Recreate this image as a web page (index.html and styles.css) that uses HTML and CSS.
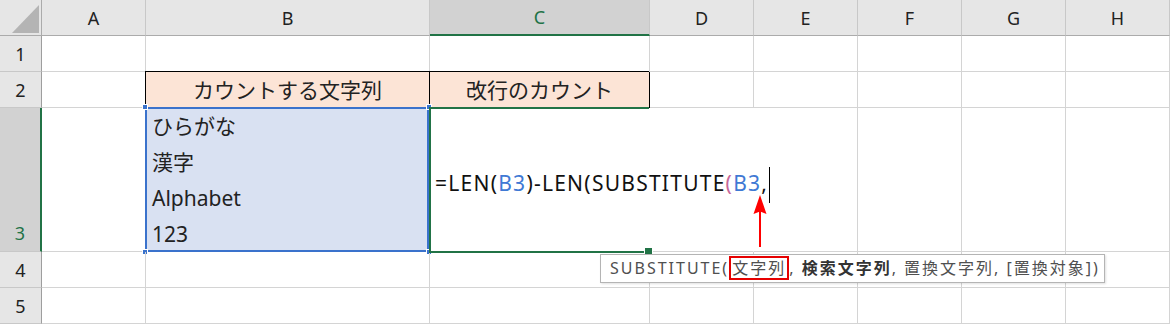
FILE: index.html
```html
<!DOCTYPE html>
<html lang="ja">
<head>
    <meta charset="UTF-8">
    <meta name="viewport" content="width=device-width, initial-scale=1.0">
    <title>SUBSTITUTE 関数</title>
    <link rel="stylesheet" href="styles.css">
</head>
<body>
    <div class="sheet">
        <div class="grid">
            <!-- column headers -->
            <div class="corner">
                <svg viewBox="0 0 42 36" width="42" height="36">
                    <polygon points="12,33 39,33 39,5" fill="#b4b4b4"></polygon>
                </svg>
            </div>
            <div class="col-head">A</div>
            <div class="col-head">B</div>
            <div class="col-head active">C</div>
            <div class="col-head">D</div>
            <div class="col-head">E</div>
            <div class="col-head">F</div>
            <div class="col-head">G</div>
            <div class="col-head">H</div>

            <!-- row 1 -->
            <div class="row-head">1</div>
            <div class="cell"></div>
            <div class="cell"></div>
            <div class="cell"></div>
            <div class="cell"></div>
            <div class="cell"></div>
            <div class="cell"></div>
            <div class="cell"></div>
            <div class="cell"></div>

            <!-- row 2 -->
            <div class="row-head">2</div>
            <div class="cell"></div>
            <div class="cell title">カウントする文字列</div>
            <div class="cell title">改行のカウント</div>
            <div class="cell"></div>
            <div class="cell"></div>
            <div class="cell"></div>
            <div class="cell"></div>
            <div class="cell"></div>

            <!-- row 3 -->
            <div class="row-head active tall">3</div>
            <div class="cell"></div>
            <div class="cell source">
                ひらがな<br>漢字<br>Alphabet<br>123
                <span class="handle tl"></span>
                <span class="handle tr"></span>
                <span class="handle bl"></span>
                <span class="handle br"></span>
            </div>
            <div class="cell editing">
                <div class="formula">=LEN(<span class="ref">B3</span>)-LEN(SUBSTITUTE<span class="paren">(</span><span class="ref">B3</span>,<span class="caret"></span></div>
            </div>
            <div class="cell spill"></div>
            <div class="cell"></div>
            <div class="cell"></div>
            <div class="cell"></div>
            <div class="cell"></div>

            <!-- row 4 -->
            <div class="row-head">4</div>
            <div class="cell"></div>
            <div class="cell"></div>
            <div class="cell"></div>
            <div class="cell"></div>
            <div class="cell"></div>
            <div class="cell"></div>
            <div class="cell"></div>
            <div class="cell"></div>

            <!-- row 5 -->
            <div class="row-head">5</div>
            <div class="cell"></div>
            <div class="cell"></div>
            <div class="cell"></div>
            <div class="cell"></div>
            <div class="cell"></div>
            <div class="cell"></div>
            <div class="cell"></div>
            <div class="cell"></div>
        </div>

        <div class="tooltip">SUBSTITUTE(<span class="mark">文字列</span>, <b>検索文字列</b>, 置換文字列, [置換対象])</div>

        <svg class="arrow" viewBox="0 0 20 60" width="20" height="60">
            <rect x="9" y="20" width="2" height="37" fill="#ff0000"></rect>
            <polygon points="10,5 16.5,24 10,21.5 3.5,24" fill="#ff0000"></polygon>
        </svg>
    </div>
</body>
</html>
```

FILE: styles.css
```css
* {
    margin: 0;
    padding: 0;
    box-sizing: border-box;
}

body {
    background: #fff;
    font-family: "Noto Sans", "Noto Sans CJK JP", sans-serif;
    color: #000;
    overflow: hidden;
}

.sheet {
    position: relative;
    width: 1170px;
    height: 325px;
}

.grid {
    display: grid;
    grid-template-columns: 42px 104px 284px 220px repeat(5, 104px);
    grid-template-rows: 36px 36px 36px 144px 36px 36px;
}

/* headers */
.corner {
    background: #e6e6e6;
    border-right: 1px solid #ababab;
    border-bottom: 1px solid #ababab;
}

.corner svg {
    display: block;
}

.col-head,
.row-head {
    display: flex;
    align-items: center;
    justify-content: center;
    background: #e6e6e6;
    font-size: 18px;
    color: #222;
}

.col-head {
    border-right: 1px solid #c8c8c8;
    border-bottom: 1px solid #ababab;
}

.row-head {
    border-right: 1px solid #9e9e9e;
    border-bottom: 1px solid #c8c8c8;
}

.col-head.active {
    background: #d2d2d2;
    color: #217346;
    border-bottom: 2px solid #217346;
}

.row-head.active {
    background: #d2d2d2;
    color: #217346;
    border-right: 2px solid #217346;
}

.row-head.tall {
    align-items: flex-end;
    line-height: 36px;
}

/* cells */
.cell {
    position: relative;
    border-right: 1px solid #d4d4d4;
    border-bottom: 1px solid #d4d4d4;
    font-size: 21px;
    line-height: 36px;
}

.cell.title {
    display: flex;
    align-items: center;
    justify-content: center;
    background: #fce4d6;
    border-right: 1px solid #000;
    border-bottom: 1px solid #000;
    box-shadow: -1px -1px 0 #000;
    color: #222;
}

.cell.source {
    background: #d9e1f2;
    padding-left: 6px;
    color: #222;
}

.cell.source::before {
    content: "";
    position: absolute;
    left: -1px;
    top: -1px;
    right: 0;
    bottom: -1px;
    border: 2px solid #3a72cc;
}

.handle {
    position: absolute;
    width: 6px;
    height: 6px;
    background: #3a72cc;
    border: 1px solid #fff;
}

.handle.tl { left: -4px; top: -4px; }
.handle.tr { right: -3px; top: -4px; }
.handle.bl { left: -4px; bottom: -4px; }
.handle.br { right: -3px; bottom: -4px; }

.cell.editing {
    padding: 57px 0 0 5px;
    white-space: nowrap;
    border-right-color: transparent;
    z-index: 1;
}

.cell.editing::before {
    content: "";
    position: absolute;
    left: -1px;
    top: -1px;
    right: 0;
    bottom: -2px;
    border: 2px solid #217346;
    border-right: none;
}

.cell.editing::after {
    content: "";
    position: absolute;
    right: -4px;
    bottom: -5px;
    width: 7px;
    height: 7px;
    background: #217346;
    border: 1px solid #fff;
}

.cell.spill {
    border-right-color: transparent;
}

.formula {
    color: #111;
    letter-spacing: 1.25px;
}

.ref {
    color: #3f79d4;
}

.paren {
    color: #c8689a;
}

.caret {
    display: inline-block;
    width: 1px;
    height: 36px;
    margin-left: 1px;
    vertical-align: middle;
    background: #000;
}

/* function tooltip */
.tooltip {
    position: absolute;
    left: 600px;
    top: 254px;
    width: 505px;
    height: 29px;
    padding-left: 9px;
    line-height: 27px;
    background: #fff;
    border: 1px solid #b4b4b4;
    box-shadow: 1px 1px 2px rgba(0, 0, 0, 0.12);
    font-size: 16px;
    letter-spacing: 2px;
    color: #505050;
    white-space: nowrap;
    z-index: 2;
}

.tooltip b {
    color: #333;
    font-weight: 700;
}

.mark {
    display: inline-block;
    line-height: 20px;
    border: 2px solid #e60000;
    padding: 0 1px;
    vertical-align: middle;
    margin-top: -3px;
}

.arrow {
    position: absolute;
    left: 750px;
    top: 190px;
    z-index: 3;
}
```
